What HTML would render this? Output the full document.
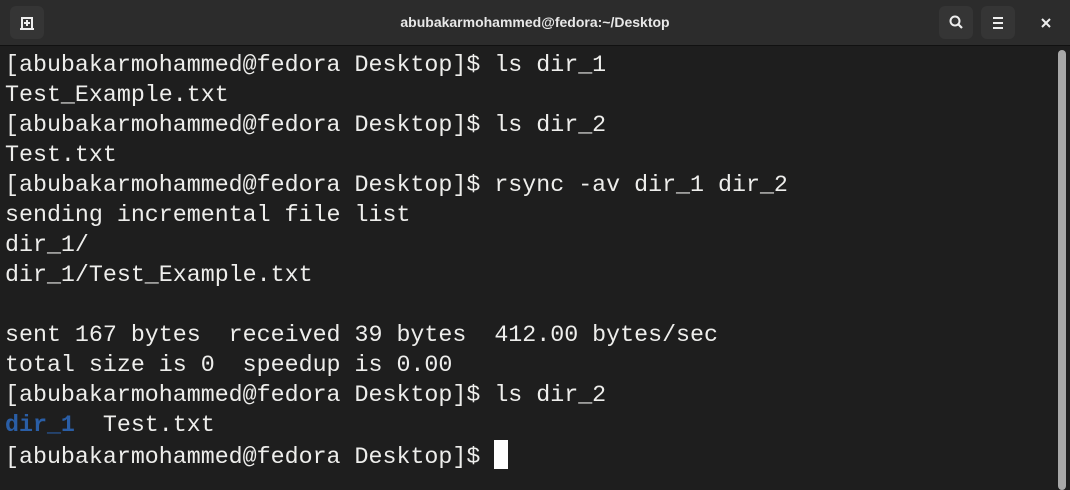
<!DOCTYPE html>
<html><head><style>
html,body{margin:0;padding:0;width:1070px;height:479px;overflow:hidden;background:#1e1e1e;}
.hdr{position:absolute;left:0;top:0;width:1070px;height:45px;background:#2c2c2c;border-bottom:1px solid #111;}
.title{position:absolute;left:0;width:1070px;top:0;height:45px;text-align:center;color:#e8e8e8;font-family:"Liberation Sans",sans-serif;font-weight:bold;font-size:14px;line-height:45px;}
.btn{position:absolute;top:6px;width:34px;height:33px;border-radius:6px;background:#353535;}
.term{position:absolute;left:5px;top:50px;font-family:"Liberation Mono",monospace;font-size:23.3px;line-height:30px;color:#eeeeec;white-space:pre;}
.b{color:#2a5ea6;font-weight:bold;}
.cur{display:inline-block;width:14px;height:29px;background:#fff;vertical-align:-6px;}
.sb{position:absolute;left:1058px;top:50px;width:8px;height:440px;border-radius:4px;background:#a8a8a8;}
</style></head><body>
<div class="hdr">
<div class="title">abubakarmohammed@fedora:~/Desktop</div>
<div class="btn" style="left:10px"><svg width="34" height="33"><path d="M12 23V12h10v11M10 23h14" stroke="#eee" stroke-width="2" fill="none"/><path d="M17 14v6M14 17h6" stroke="#eee" stroke-width="2"/></svg></div>
<div class="btn" style="left:939px"><svg width="34" height="33"><circle cx="16" cy="15" r="4.5" stroke="#eee" stroke-width="2" fill="none"/><path d="M19 18l4 4" stroke="#eee" stroke-width="2.2"/></svg></div>
<div class="btn" style="left:981px"><svg width="34" height="33"><path d="M12 12h10M12 17h10M12 22h10" stroke="#eee" stroke-width="2"/></svg></div>
<svg style="position:absolute;left:1038px;top:15px" width="16" height="16"><path d="M4 4l8 8M12 4l-8 8" stroke="#eee" stroke-width="2"/></svg>
</div>
<div class="term">[abubakarmohammed@fedora Desktop]$ ls dir_1
Test_Example.txt
[abubakarmohammed@fedora Desktop]$ ls dir_2
Test.txt
[abubakarmohammed@fedora Desktop]$ rsync -av dir_1 dir_2
sending incremental file list
dir_1/
dir_1/Test_Example.txt

sent 167 bytes  received 39 bytes  412.00 bytes/sec
total size is 0  speedup is 0.00
[abubakarmohammed@fedora Desktop]$ ls dir_2
<span class="b">dir_1</span>  Test.txt
[abubakarmohammed@fedora Desktop]$ <span class="cur"></span></div>
<div class="sb"></div>
</body></html>
